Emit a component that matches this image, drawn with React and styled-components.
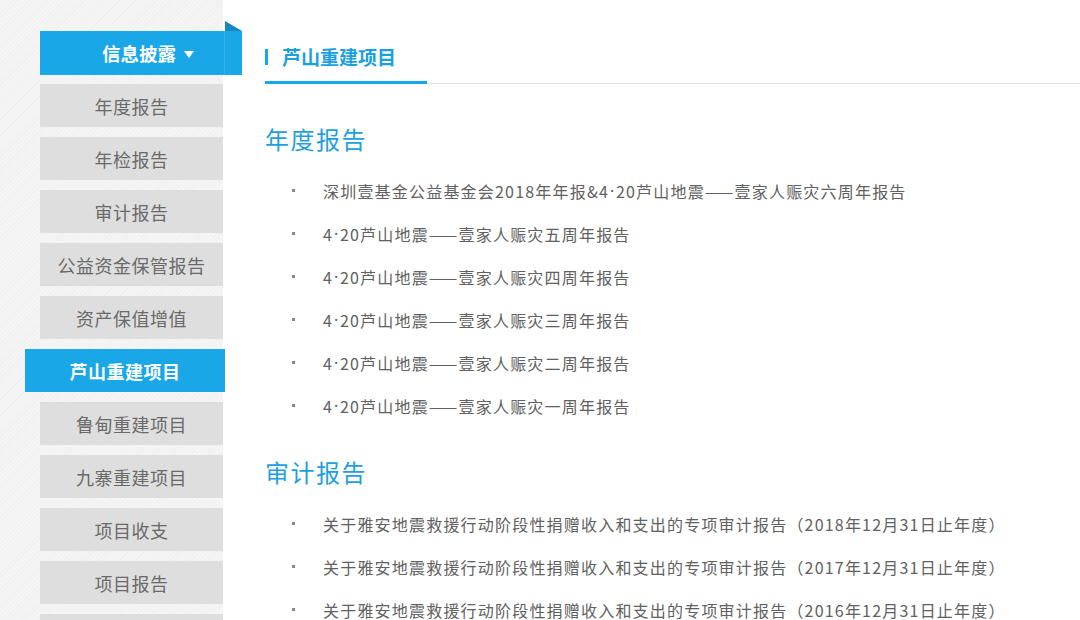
import React from "react";
import styled, { createGlobalStyle } from "styled-components";

const GlobalStyle = createGlobalStyle`
  html, body {
    margin: 0;
    padding: 0;
    height: 620px;
    overflow: hidden;
    background: #fff;
  }
  body {
    font-family: "Noto Sans CJK SC", "Noto Sans", sans-serif;
  }
`;

const BLUE = "#1aa7e8";

const Page = styled.div`
  display: flex;
  width: 1080px;
  height: 620px;
  overflow: hidden;
`;

const Sidebar = styled.aside`
  width: 223px;
  flex-shrink: 0;
  padding: 31px 0 0 40px;
  box-sizing: border-box;
  background-color: #f5f5f5;
  background-image: repeating-linear-gradient(
    135deg,
    rgba(0, 0, 0, 0.018) 0 1px,
    transparent 1px 3px
  );
  display: flex;
  flex-direction: column;
`;

const NavHead = styled.div`
  position: relative;
  flex-shrink: 0;
  width: 202px;
  height: 44px;
  background: ${BLUE};
  color: #fff;
  font-size: 18.5px;
  font-weight: 700;
  display: flex;
  align-items: center;
  justify-content: center;
  padding-left: 14px;
  box-sizing: border-box;
  margin-bottom: 9px;
  z-index: 1;

  /* folded corner where the tab sticks out past the column */
  &::before {
    content: "";
    position: absolute;
    right: 0;
    top: -10px;
    width: 17px;
    height: 10px;
    background: #1487bd;
    clip-path: polygon(0 0, 100% 100%, 0 100%);
  }
  &::after {
    content: "";
    position: absolute;
    right: 17px;
    top: 0;
    bottom: 0;
    width: 1px;
    background: rgba(255, 255, 255, 0.12);
  }
`;

const Caret = styled.span`
  display: inline-block;
  margin-left: 8px;
  width: 0;
  height: 0;
  border-left: 5px solid transparent;
  border-right: 5px solid transparent;
  border-top: 7px solid #fff;
  transform: translateY(1px);
`;

const NavItem = styled.div`
  width: ${(p) => (p.$active ? "200px" : "183px")};
  height: 43px;
  margin: 0 0 10px ${(p) => (p.$active ? "-15px" : "0")};
  background: ${(p) => (p.$active ? BLUE : "#dedede")};
  color: ${(p) => (p.$active ? "#fff" : "#6a6a6a")};
  font-size: 18px;
  letter-spacing: 0.5px;
  font-weight: ${(p) => (p.$active ? 700 : 400)};
  display: flex;
  align-items: center;
  justify-content: center;
  flex-shrink: 0;
`;

const Main = styled.main`
  flex: 1;
  padding-left: 42px;
  min-width: 0;
`;

const TitleBar = styled.div`
  padding-top: 45px;
  border-bottom: 1px solid #e2e2e2;
  display: flex;
`;

const Title = styled.h2`
  margin: 0 0 -1px;
  width: 162px;
  padding-bottom: 12px;
  border-bottom: 3px solid ${BLUE};
  display: flex;
  align-items: center;
  font-size: 19px;
  line-height: 24px;
  font-weight: 700;
  color: #1a9fe0;

  &::before {
    content: "";
    width: 3px;
    height: 16px;
    margin-right: 14px;
    background: ${BLUE};
  }
`;

const SectionHeading = styled.h3`
  margin: ${(p) => p.$top}px 0 0;
  font-size: 24px;
  line-height: 30px;
  letter-spacing: 1.5px;
  font-weight: 400;
  color: #1ea0e0;
`;

const ReportList = styled.ul`
  list-style: none;
  margin: 15px 0 0;
  padding: 0;
`;

const ReportItem = styled.li`
  display: flex;
  align-items: center;
  height: 43px;
  padding-left: 27px;
  font-size: 16px;
  letter-spacing: 1.2px;
  color: #616161;
  white-space: nowrap;
`;

const Bullet = styled.span`
  width: 31px;
  flex-shrink: 0;
  display: flex;
  align-items: center;

  &::before {
    content: "";
    width: 3px;
    height: 3px;
    background: #888;
  }
`;

// narrow latin middle dot in "4·20"
const Dot = styled.span`
  font-family: "Noto Sans", sans-serif;
  letter-spacing: 0.5px;
  margin: 0 1px;
`;

// the double dash reads as one unbroken rule
const Dash = styled.span`
  font-size: 17px;
  letter-spacing: 0;
  margin-right: 1.2px;
`;

const renderTitle = (text) =>
  text.split(/(·|——)/).map((part, i) => {
    if (part === "·") return <Dot key={i}>·</Dot>;
    if (part === "——") return <Dash key={i}>——</Dash>;
    return part;
  });

const navItems = [
  "年度报告",
  "年检报告",
  "审计报告",
  "公益资金保管报告",
  "资产保值增值",
  "芦山重建项目",
  "鲁甸重建项目",
  "九寨重建项目",
  "项目收支",
  "项目报告",
  "",
];

const annualReports = [
  "深圳壹基金公益基金会2018年年报&4·20芦山地震——壹家人赈灾六周年报告",
  "4·20芦山地震——壹家人赈灾五周年报告",
  "4·20芦山地震——壹家人赈灾四周年报告",
  "4·20芦山地震——壹家人赈灾三周年报告",
  "4·20芦山地震——壹家人赈灾二周年报告",
  "4·20芦山地震——壹家人赈灾一周年报告",
];

const auditReports = ["2018", "2017", "2016"].map(
  (y) =>
    `关于雅安地震救援行动阶段性捐赠收入和支出的专项审计报告（${y}年12月31日止年度）`
);

export default function App() {
  return (
    <>
      <GlobalStyle />
      <Page>
        <Sidebar>
          <NavHead>
            信息披露
            <Caret />
          </NavHead>
          {navItems.map((label, i) => (
            <NavItem key={i} $active={label === "芦山重建项目"}>
              {label}
            </NavItem>
          ))}
        </Sidebar>

        <Main>
          <TitleBar>
            <Title>芦山重建项目</Title>
          </TitleBar>

          <SectionHeading $top={40}>年度报告</SectionHeading>
          <ReportList>
            {annualReports.map((text) => (
              <ReportItem key={text}>
                <Bullet />
                {renderTitle(text)}
              </ReportItem>
            ))}
          </ReportList>

          <SectionHeading $top={30}>审计报告</SectionHeading>
          <ReportList>
            {auditReports.map((text) => (
              <ReportItem key={text}>
                <Bullet />
                {text}
              </ReportItem>
            ))}
          </ReportList>
        </Main>
      </Page>
    </>
  );
}
